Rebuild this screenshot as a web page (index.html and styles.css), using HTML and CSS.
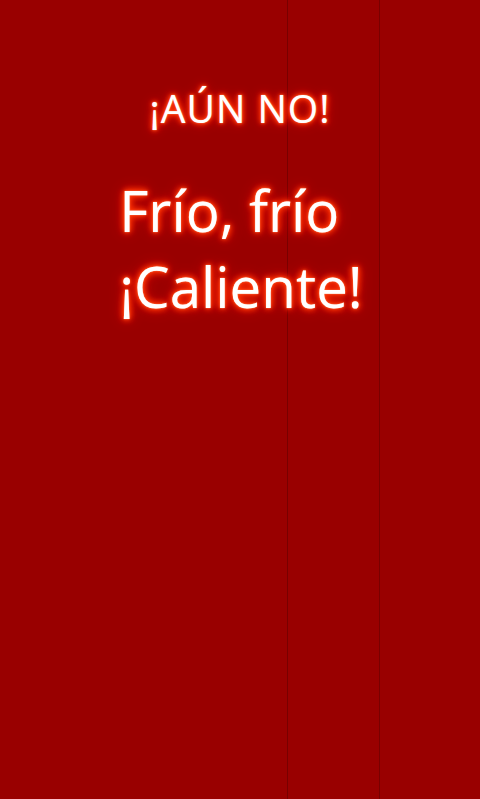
FILE: index.html
```html
<!DOCTYPE html>
<html lang="es">
<head>
<meta charset="utf-8">
<link rel="stylesheet" href="styles.css">
</head>
<body>
<div class="screen">
  <div class="stripes">
    <div class="col col-a"></div>
    <div class="col col-b"></div>
    <div class="col col-c"></div>
  </div>
  <div class="content">
    <h2 class="status">¡AÚN NO!</h2>
    <div class="hint">
      <p class="line">Frío, frío</p>
      <p class="line">¡Caliente!</p>
    </div>
  </div>
</div>
</body>
</html>
```
FILE: styles.css
```css
html, body {
  margin: 0;
  padding: 0;
  background: #990000;
}
.screen {
  position: relative;
  width: 480px;
  height: 799px;
  overflow: hidden;
  background: #990000;
  font-family: "Open Sans", "Noto Sans", sans-serif;
  color: #ffffff;
}
.stripes {
  position: absolute;
  inset: 0;
  display: flex;
}
.col-a {
  width: 287px;
  border-right: 1px solid #780000;
}
.col-b {
  width: 91px;
  border-right: 1px solid #780000;
}
.col-c {
  flex: 1;
}
.content {
  position: relative;
  display: flex;
  flex-direction: column;
  align-items: center;
  padding-top: 82px;
}
.status {
  margin: 0;
  font-size: 39px;
  font-weight: 400;
  letter-spacing: 1px;
  line-height: 52px;
  text-shadow: 0 0 1px #ffb090, 0 0 3px #ff5020, 0 0 5px #ff3300, 0 0 6px #ff3300, 0 0 9px #ff2200, 0 0 13px #e01000;
}
.hint {
  margin-top: 39px;
  margin-left: 2px;
  text-align: left;
}
.line {
  margin: 0;
  font-size: 56.5px;
  line-height: 76px;
  text-shadow: 0 0 1px #ffb090, 0 0 3px #ff5020, 0 0 6px #ff3300, 0 0 7px #ff3300, 0 0 10px #ff2200, 0 0 15px #e01000;
}
```
